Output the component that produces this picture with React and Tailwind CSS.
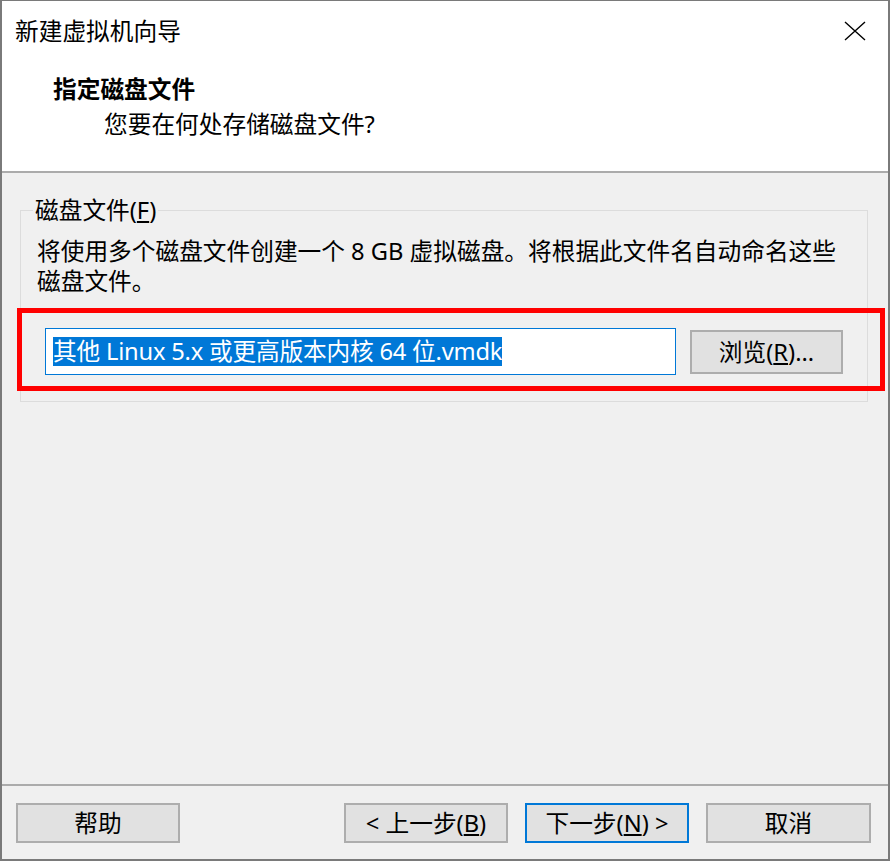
import React from 'react';

const Btn = ({ children, primary, className = '' }) => (
  <button
    className={`h-[40px] flex items-center justify-center border-2 bg-[#e1e1e1] leading-[30px] ${primary ? 'border-[#0078d7]' : 'border-[#adadad]'} ${className}`}
  >
    {children}
  </button>
);

const CloseIcon = () => (
  <svg width="22" height="20" viewBox="0 0 22 20" fill="none">
    <path d="M1 1 L21 19 M21 1 L1 19" stroke="#000" strokeWidth="1.4" />
  </svg>
);

export default function App() {
  return (
    <div className="relative flex h-[861px] w-[890px] flex-col overflow-hidden border-2 border-t border-[#7a7a7a] bg-[#f0f0f0] text-[23.7px] text-black font-['Noto_Sans','Noto_Sans_CJK_SC',sans-serif]">
      {/* header */}
      <div className="h-[172px] shrink-0 border-b-2 border-[#ababab] bg-white">
        <div className="flex h-[60px] items-center justify-between pl-[13px] pr-[22px]">
          <span className="leading-[30px]">新建虚拟机向导</span>
          <CloseIcon />
        </div>
        <div className="mt-[13px] pl-[51px] font-bold leading-[30px]">指定磁盘文件</div>
        <div className="mt-[5px] pl-[102px] leading-[30px]">您要在何处存储磁盘文件?</div>
      </div>

      {/* body */}
      <div className="flex-1">
        <fieldset className="ml-[18px] mt-[22px] w-[848px] border border-[#dcdcdc] pb-[26px]">
          <legend className="ml-[12px] px-[2px] leading-[30px]">
            磁盘文件(<u>F</u>)
          </legend>
          <div className="pl-[16px] pt-[11px]">
            <p className="leading-[30px]">
              将使用多个磁盘文件创建一个 8 GB 虚拟磁盘。将根据此文件名自动命名这些
              <br />
              磁盘文件。
            </p>
            <div className="mt-[32px] flex items-center">
              <div className="ml-[8px] flex h-[47px] w-[631px] items-center border border-[#0078d7] bg-white pl-[7px]">
                <span className="bg-[#0078d7] leading-[29px] tracking-[-0.2px] text-white whitespace-pre">其他 Linux 5.x 或更高版本内核 64 位.vmdk</span>
              </div>
              <button className="ml-[14px] flex h-[44px] w-[153px] items-center justify-center border-2 border-[#adadad] bg-[#e1e1e1] leading-[30px]">
                浏览(<u>R</u>)...
              </button>
            </div>
          </div>
        </fieldset>
      </div>

      {/* footer */}
      <div className="flex h-[75px] shrink-0 items-start border-t-2 border-[#ababab] pl-[14px] pr-[17px] pt-[17px]">
        <Btn className="w-[164px]">帮助</Btn>
        <div className="ml-auto flex gap-[17px]">
          <Btn className="w-[164px]">&lt; 上一步(<u>B</u>)</Btn>
          <Btn primary className="w-[164px]">下一步(<u>N</u>) &gt;</Btn>
          <Btn className="w-[165px]">取消</Btn>
        </div>
      </div>

      {/* annotation */}
      <div className="pointer-events-none absolute left-[15px] top-[307px] h-[83px] w-[868px] border-[5px] border-[#ff0000]" />
    </div>
  );
}
